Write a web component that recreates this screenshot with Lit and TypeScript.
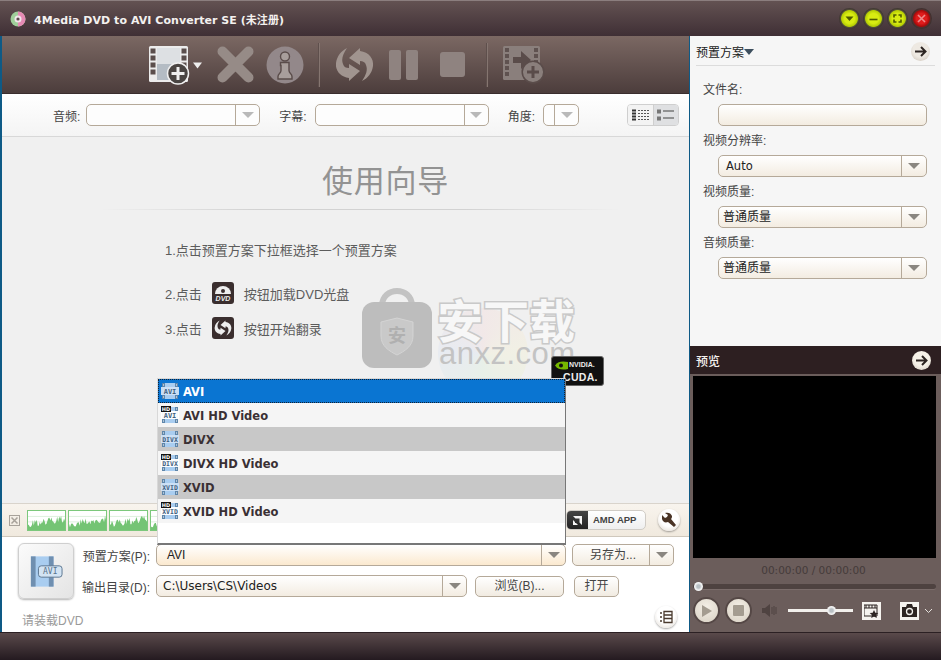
import { LitElement, html, css, svg } from 'lit';
import { customElement } from 'lit/decorators.js';

const formats = [
  { name: 'AVI', tag: 'AVI', hd: false, cls: 'sel' },
  { name: 'AVI HD Video', tag: 'AVI', hd: true, cls: 'light' },
  { name: 'DIVX', tag: 'DIVX', hd: false, cls: 'dark' },
  { name: 'DIVX HD Video', tag: 'DIVX', hd: true, cls: 'light' },
  { name: 'XVID', tag: 'XVID', hd: false, cls: 'dark' },
  { name: 'XVID HD Video', tag: 'XVID', hd: true, cls: 'light' },
];

// spiky audio-level outline for the little thumbnails
function wave(seed: number) {
  let d = 'M0 21';
  let v = seed;
  for (let x = 0; x <= 38; x++) {
    v = (v * 37 + 11) % 101;
    const rise = 3 + (x / 38) * 6;
    const h = rise + (v % 7 === 0 ? 7 : (v % 5));
    d += `L${x} ${21 - h}`;
  }
  return d + 'L38 21Z';
}

const syncShape = svg`
  <path d="M13 12L24 2V5C33 6 38 13 37 20C36 27 32 32 26 35C30 29 32 24 30 19C29 16 27 15 24 15V19Z" />
  <path d="M24 25L13 35V32C4 31 -1 24 0 17C1 10 5 5 11 2C7 8 5 13 7 18C8 21 10 22 13 22V18Z" />
`;

function filmIcon(tag: string, hd: boolean) {
  return html`<svg class="film" width="18" height="18" viewBox="0 0 18 18">
    <rect x="2" y="1" width="14" height="16" fill="#a9cdf0" />
    <rect x="1" y="1" width="3" height="16" fill="#5f86aa" />
    <rect x="14" y="1" width="3" height="16" fill="#5f86aa" />
    <path d="M2 3h1M2 6h1M2 9h1M2 12h1M2 15h1M15 3h1M15 6h1M15 9h1M15 12h1M15 15h1" stroke="#fff" stroke-width="1.2" />
    <rect x="0" y="5" width="18" height="8" fill=${hd ? '#fff' : '#cfe2f5'} opacity=".95" />
    <text x="9" y="11.600" text-anchor="middle" font-family="DejaVu Sans Mono" font-size=${tag.length > 3 ? 6.5 : 7} fill="#3f5f80">${tag}</text>
    ${hd
      ? svg`<rect x="0" y="0" width="10" height="6" fill="#111" /><text x="5" y="5" text-anchor="middle" font-family="DejaVu Sans" font-weight="700" font-size="5" fill="#fff">HD</text>`
      : ''}
  </svg>`;
}

function combo(text: string, cls = '') {
  return html`<div class="combo ${cls}">
    <span class="combo-text">${text}</span>
    <span class="combo-arrow"><i class="tri"></i></span>
  </div>`;
}

@customElement('app-root')
export class AppRoot extends LitElement {
  static styles = css`
    :host {
      display: block;
      width: 941px;
      height: 660px;
      font-family: "Liberation Sans", "Noto Sans CJK SC", sans-serif;
      font-size: 12px;
      color: #333;
      overflow: hidden;
    }
    .window {
      position: relative;
      width: 941px;
      height: 660px;
      display: flex;
      flex-direction: column;
      background: #4a3a3c;
      overflow: hidden;
    }
    .title {
      height: 36px;
      flex: none;
      display: flex;
      align-items: center;
      padding: 0 9px;
      box-sizing: border-box;
      background: linear-gradient(#635252, #3f2f35);
      border-top: 1px solid #8b7e7e;
    }
    .title-text {
      margin-left: 7px;
      font-family: "DejaVu Sans", "Noto Sans CJK SC", sans-serif;
      font-size: 11px;
      font-weight: 700;
      letter-spacing: .05px;
      color: #f4f1ef;
    }
    .win-btns {
      margin-left: auto;
      display: flex;
      gap: 3px;
    }
    .win-btn {
      width: 21px;
      height: 21px;
      border-radius: 50%;
      background: radial-gradient(circle 10.500px, #d8ec12 0 5px, #b4cc04 8px, #55523a 8.800px, #38302e 100%);
      display: flex;
      align-items: center;
      justify-content: center;
    }
    .win-btn.close {
      background: radial-gradient(circle 10.500px, #e01c1c 0 5px, #a80a0a 8px, #53302f 8.800px, #38302e 100%);
    }
    .middle {
      flex: 1;
      min-height: 0;
      display: flex;
      padding-left: 2px;
      background: #0e5a86;
    }
    .left {
      width: 687px;
      flex: none;
      display: flex;
      flex-direction: column;
      margin-right: 1px;
    }
    .right {
      flex: 1;
      display: flex;
      flex-direction: column;
      background: #f6f6f6;
    }
    .toolbar {
      height: 58px;
      flex: none;
      box-sizing: border-box;
      padding-left: 146px;
      display: flex;
      align-items: center;
      background: linear-gradient(#7b6863, #4c3d3c);
      border-bottom: 1px solid #3a2e2e;
    }
    .tb-sep {
      width: 1px;
      height: 44px;
      background: #5e4f4c;
      box-shadow: 1px 0 0 #857570;
    }
    .t-x { margin-left: 14px; }
    .t-info { margin-left: 12px; }
    .t-sep1 { margin-left: 14px; }
    .t-sync { margin-left: 17px; }
    .t-pause { margin-left: 15px; }
    .t-stop { margin-left: 22px; }
    .t-sep2 { margin-left: 21px; }
    .t-film { margin-left: 16px; }
    .filters {
      height: 43px;
      flex: none;
      box-sizing: border-box;
      display: flex;
      align-items: center;
      padding: 0 10px 0 51px;
      background: linear-gradient(#fff, #f4f4f4);
      border-bottom: 1px solid #d8d8d8;
    }
    .filters label {
      font-size: 12px;
      color: #444;
      margin-right: 8px;
    }
    .filters label:first-child {
      margin-right: 6px;
    }
    .combo {
      display: flex;
      height: 22px;
      box-sizing: border-box;
      border: 1px solid #b5a999;
      border-radius: 5px;
      background: linear-gradient(#fff, #f3ece1);
    }
    .combo-text {
      flex: 1;
      min-width: 0;
      padding-left: 4px;
      line-height: 20px;
      font-size: 12px;
      color: #222;
      white-space: nowrap;
      overflow: hidden;
    }
    .combo-arrow {
      width: 23px;
      flex: none;
      border-left: 1px solid #b5a999;
      display: flex;
      align-items: center;
      justify-content: center;
    }
    .tri {
      width: 0;
      height: 0;
      border-style: solid;
      border-width: 6px 6px 0;
      border-color: #8a8680 transparent transparent;
    }
    .plain {
      background: #fdfdfd;
    }
    .plain .tri {
      border-top-color: #b9b9b9;
    }
    .f-audio { width: 174px; margin-right: 19px; }
    .f-sub { width: 174px; margin-right: 19px; }
    .f-angle { width: 36px; }
    .f-angle .combo-text { padding: 0; }
    .view-toggle {
      margin-left: auto;
      display: flex;
      width: 52px;
      height: 22px;
      border: 1px solid #cfcfcf;
      border-radius: 4px;
      box-sizing: border-box;
      overflow: hidden;
    }
    .view-toggle span {
      flex: 1;
      display: flex;
      align-items: center;
      justify-content: center;
      background: #f3f3f3;
    }
    .view-toggle span + span {
      background: #dfe0e2;
      border-left: 1px solid #cfcfcf;
    }
    .guide {
      flex: 1;
      min-height: 0;
      background: #f0f0f0;
      box-sizing: border-box;
      padding-top: 25px;
      display: flex;
      flex-direction: column;
    }
    .guide-title {
      padding-left: 80px;
      text-align: center;
      font-size: 31px;
      line-height: 40px;
      letter-spacing: .8px;
      color: #939393;
    }
    .guide-rule {
      height: 1px;
      width: 520px;
      margin: 7px 0 0 98px;
      background: linear-gradient(90deg, transparent, #d2d2d2 30%, #d2d2d2 70%, transparent);
    }
    .steps {
      margin: 27px 0 0 163px;
      display: flex;
      flex-direction: column;
      font-size: 13px;
      color: #5c5c5c;
    }
    .step {
      display: flex;
      align-items: center;
      height: 24px;
      margin-bottom: 11px;
    }
    .step:first-child { margin-bottom: 20px; }
    .step-icon {
      width: 22px;
      height: 22px;
      margin: 0 10px;
      border-radius: 3px;
      background: #3a2e2e;
      display: flex;
    }
    .strip {
      height: 34px;
      flex: none;
      box-sizing: border-box;
      display: flex;
      align-items: center;
      padding: 0 9px 0 7px;
      background: linear-gradient(#f8f4ee, #f0e9de);
      border-top: 1px solid #d9d4cc;
      border-bottom: 1px solid #cfc8bc;
    }
    .strip-x {
      width: 11px;
      height: 11px;
      box-sizing: border-box;
      border: 1px solid #a8a29a;
      margin-right: 7px;
      display: flex;
    }
    .thumbs {
      display: flex;
      gap: 2px;
    }
    .thumb {
      width: 39px;
      height: 21px;
      box-sizing: border-box;
      border: 1px solid #7cc87c;
      background: #fff;
      display: flex;
    }
    .amd {
      margin-left: auto;
      display: flex;
      align-items: stretch;
      width: 80px;
      height: 20px;
      margin-right: 1px;
      border: 1px solid #d0ccc6;
      border-radius: 5px;
      box-sizing: border-box;
      background: linear-gradient(#fff, #efefef);
      overflow: hidden;
      font-size: 9.500px;
      font-weight: 700;
      color: #444;
      line-height: 18px;
    }
    .amd b {
      width: 21px;
      margin-right: 5px;
      background: linear-gradient(#444, #222);
      display: flex;
      align-items: center;
      justify-content: center;
    }
    .round {
      border-radius: 50%;
      background: radial-gradient(circle at 50% 40%, #fff 50%, #ddd5cb);
      box-shadow: 0 1px 2px rgba(0, 0, 0, .35);
      display: flex;
      align-items: center;
      justify-content: center;
    }
    .wrench {
      width: 22px;
      height: 22px;
      margin-left: 11px;
    }
    .form {
      height: 95px;
      flex: none;
      box-sizing: border-box;
      background: #fff;
      padding: 6px 10px 0 16px;
      display: grid;
      grid-template-columns: 56px 1fr;
      grid-template-rows: 56px auto;
      align-content: start;
      column-gap: 6px;
    }
    .format-btn {
      width: 56px;
      height: 56px;
      box-sizing: border-box;
      border: 1px solid #cfcfcf;
      border-radius: 6px;
      background: linear-gradient(135deg, #fbfbfb, #e4e4e4);
      box-shadow: 0 1px 2px rgba(0, 0, 0, .3);
      display: flex;
      align-items: center;
      justify-content: center;
    }
    .form-rows {
      display: flex;
      flex-direction: column;
      gap: 9px;
      padding-top: 1px;
    }
    .form-row {
      display: flex;
      align-items: center;
    }
    .form-row label {
      width: 70px;
      white-space: nowrap;
      text-align: right;
      margin-right: 6px;
      font-size: 12px;
      color: #444;
    }
    .c-preset {
      width: 410px;
      background: linear-gradient(#fff, #fbe9cf);
      margin-right: 6px;
    }
    .c-preset .combo-text { padding-left: 10px; }
    .c-saveas { width: 102px; }
    .c-saveas .combo-text { text-align: center; color: #444; }
    .c-dir {
      width: 311px;
      margin-right: 8px;
    }
    .c-dir .combo-text {
      padding-left: 6px;
      font-family: "DejaVu Sans", sans-serif;
      font-size: 12px;
      line-height: 21px;
    }
    .btn {
      height: 21px;
      box-sizing: border-box;
      border: 1px solid #b5a999;
      border-radius: 5px;
      background: linear-gradient(#fff, #f1ebe1);
      text-align: center;
      line-height: 19px;
      font-size: 12px;
      color: #444;
    }
    .b-browse { width: 89px; margin-right: 10px; }
    .b-open { width: 45px; }
    .form-foot {
      grid-column: 1 / 3;
      display: flex;
      align-items: center;
      padding: 7px 0 0 4px;
      font-size: 12px;
      color: #9a9a9a;
    }
    .foot-text { padding-top: 4px; }
    .log {
      width: 22px;
      height: 22px;
      margin-left: auto;
      margin-right: 2px;
    }
    .panel {
      flex: 1;
      min-height: 0;
      display: flex;
      flex-direction: column;
      padding: 0 6px;
      background: #f6f6f6;
      box-sizing: border-box;
    }
    .panel-head {
      height: 30px;
      flex: none;
      box-sizing: border-box;
      display: flex;
      align-items: center;
      border-bottom: 1px solid #dcdcdc;
      font-size: 12px;
      color: #222;
      padding-top: 2px;
    }
    .panel-head .tri {
      border-top-color: #3d4f5e;
      border-width: 6px 5px 0;
    }
    .go {
      margin-left: auto;
      margin-right: 5px;
      width: 19px;
      height: 19px;
      background: radial-gradient(circle at 50% 40%, #eee9e2 50%, #c9bfb3);
      box-shadow: none;
    }
    .fields {
      padding: 15px 8px 0 7px;
      display: flex;
      flex-direction: column;
    }
    .fields label {
      height: 17px;
      line-height: 19px;
      font-size: 12px;
      color: #444;
      margin-bottom: 6px;
    }
    .fields .combo {
      margin: 0 0 6px 15px;
    }
    .fields .combo-arrow { width: 24px; }
    .latin .combo-text {
      padding-left: 7px;
      font-family: "DejaVu Sans", sans-serif;
      font-size: 11.500px;
    }
    .preview {
      height: 286px;
      flex: none;
      display: flex;
      flex-direction: column;
      background: #6b5d5b;
    }
    .preview-head {
      height: 28px;
      flex: none;
      box-sizing: border-box;
      display: flex;
      align-items: center;
      padding: 0 5px 0 6px;
      background: #2d1f21;
      color: #f4f1ee;
      font-size: 12px;
      font-weight: 500;
    }
    .preview-head .go {
      background: radial-gradient(circle at 50% 40%, #f6f1e8 50%, #cfc6ba);
    }
    .screen {
      height: 182px;
      flex: none;
      margin: 2px 5px 0 3px;
      background: #000;
    }
    .time {
      text-align: center;
      font-size: 10.500px;
      line-height: 14px;
      margin-top: 5px;
      padding-right: 4px;
      font-family: "DejaVu Sans", sans-serif;
      color: #453b3a;
    }
    .seek {
      position: relative;
      height: 5px;
      margin: 7px 5px 0 3px;
      border-radius: 3px;
      background: #4e4240;
      box-shadow: 0 1px 0 #7a6c6a;
    }
    .knob {
      position: absolute;
      top: -2px;
      left: 1px;
      width: 9px;
      height: 9px;
      border-radius: 50%;
      background: radial-gradient(circle, #b9c0c4 25%, #f2f2f2 55%);
    }
    .controls {
      display: flex;
      align-items: center;
      margin-top: 8px;
      padding-left: 3px;
    }
    .pbtn {
      width: 27px;
      height: 27px;
      box-sizing: border-box;
      border-radius: 50%;
      border: 2px solid #554846;
      background: radial-gradient(circle at 50% 35%, #f4efe6, #d8d0c3);
      display: flex;
      align-items: center;
      justify-content: center;
      margin-right: 5px;
    }
    .vol-icon { margin-left: 5px; }
    .vol {
      position: relative;
      width: 65px;
      height: 3px;
      margin-left: 11px;
      background: #f2f0ec;
    }
    .vol .knob {
      left: 39px;
      top: -3px;
    }
    .snap {
      width: 19px;
      height: 18px;
      background: #f5f3ef;
      display: flex;
      align-items: center;
      justify-content: center;
    }
    .s-clip { margin-left: 9px; }
    .s-cam { margin-left: 19px; }
    .chev { margin-left: 5px; }
    .status {
      height: 28px;
      flex: none;
      background: linear-gradient(#5a4a4b, #241a20);
      border-top: 1px solid #2b2023;
      box-sizing: border-box;
    }
    .menu {
      position: absolute;
      left: 157px;
      top: 378px;
      width: 409px;
      height: 167px;
      box-sizing: border-box;
      background: #fff;
      border: 1px solid #d8d8d8;
      border-right: 1px solid #777;
      border-bottom: 2px solid #777;
    }
    .item {
      height: 24px;
      display: flex;
      align-items: center;
      gap: 4px;
      padding-left: 3px;
      font-family: "DejaVu Sans", sans-serif;
      font-size: 11.500px;
      font-weight: 700;
      color: #3a3034;
    }
    .item span { padding-top: 2px; }
    .item.sel {
      background: #0a75d2;
      color: #fff;
      outline: 1px dotted #123;
      outline-offset: -1px;
    }
    .item.light { background: #f5f5f5; }
    .item.dark { background: #c8c8c8; }
    .watermark {
      position: absolute;
      left: 362px;
      top: 288px;
      display: flex;
      gap: 5px;
      pointer-events: none;
    }
    .wm-disc {
      position: absolute;
      left: 76px;
      top: 20px;
      width: 90px;
      height: 90px;
      border-radius: 50%;
      background: conic-gradient(#f7c8c8, #f6f0b8, #c8f0c8, #c8d8f4, #f7c8c8);
      opacity: .2;
    }
    .wm-text {
      position: relative;
      display: flex;
      flex-direction: column;
      margin-top: 6px;
    }
    .wm-big {
      font-family: "Noto Sans CJK SC", sans-serif;
      font-weight: 700;
      font-size: 46px;
      line-height: 48px;
      color: #f7f7f7;
      -webkit-text-stroke: 3px #c9c9c9;
      paint-order: stroke fill;
    }
    .wm-small {
      font-family: "Liberation Sans", sans-serif;
      font-size: 31px;
      line-height: 24px;
      color: #c3c3c3;
      letter-spacing: .5px;
      margin-left: 2px;
    }
    .cuda {
      position: absolute;
      left: 551px;
      top: 356px;
      width: 53px;
      height: 30px;
      box-sizing: border-box;
      border: 1px solid #666;
      border-radius: 3px;
      background: #111;
      color: #eee;
      font-weight: 700;
      padding: 3px 0 0 3px;
    }
    .cuda-top {
      display: flex;
      align-items: center;
      gap: 1px;
      font-size: 7px;
      line-height: 10px;
    }
    .cuda em {
      display: block;
      margin: 2px 0 0 8px;
      font-style: normal;
      font-size: 10.500px;
      line-height: 11px;
      letter-spacing: .3px;
    }
  `;

  private winIcon(d: string, color = '#4d5a00') {
    return html`<svg width="11" height="11" viewBox="0 0 11 11" fill="none" stroke=${color} stroke-width="1.600"><path d=${d} /></svg>`;
  }

  render() {
    return html`
      <div class="window">
        <div class="title">
          <svg width="18" height="18" viewBox="0 0 18 18">
            <circle cx="9" cy="9" r="7.500" fill="#9fcf9a" />
            <path d="M9 1.500A7.500 7.500 0 0 1 16.500 9 7.500 7.500 0 0 1 9 16.500Z" fill="#e58ab4" />
            <circle cx="9" cy="9" r="3.500" fill="#f1e6ea" />
            <circle cx="9" cy="9" r="1.600" fill="#5e4a4e" />
          </svg>
          <span class="title-text">4Media DVD to AVI Converter SE (未注册)</span>
          <div class="win-btns">
            <div class="win-btn">
              <svg width="11" height="11" viewBox="0 0 11 11"><path d="M1.500 3.500h8L5.500 8Z" fill="#4d5a00" /></svg>
            </div>
            <div class="win-btn">${this.winIcon('M1.500 6.500h8')}</div>
            <div class="win-btn">${this.winIcon('M2 4.500V2H4.500M6.500 2H9V4.500M9 6.500V9H6.500M4.500 9H2V6.500')}</div>
            <div class="win-btn close">${this.winIcon('M2 2l7 7M9 2l-7 7', '#ee8a8a')}</div>
          </div>
        </div>

        <div class="middle">
          <div class="left">
            <div class="toolbar">
              <svg width="55" height="40" viewBox="0 0 55 40">
                <rect x="1" y="1" width="39" height="36" rx="1.500" fill="#ececec" />
                <rect x="9" y="3" width="23" height="16" fill="#dde0e3" />
                <rect x="9" y="19" width="23" height="16" fill="#b4bcc4" />
                <path d="M5 3.500v28M36 3.500v28" stroke="#5b4e4c" stroke-width="5" stroke-dasharray="5 2" />
                <circle cx="30" cy="28.500" r="10.500" fill="#4a4543" stroke="#f0f0f0" stroke-width="1.500" />
                <path d="M30 22v13M23.500 28.500h13" stroke="#f0f0f0" stroke-width="3" />
                <path d="M45 17.500h9l-4.500 6Z" fill="#eee" />
              </svg>
              <svg class="t-x" width="37" height="37" viewBox="0 0 37 37">
                <path d="M5.500 5.500L31.500 31.500M31.500 5.500L5.500 31.500" stroke="#968b87" stroke-width="10" stroke-linecap="round" />
              </svg>
              <svg class="t-info" width="38" height="38" viewBox="0 0 38 38">
                <circle cx="19" cy="19" r="18.500" fill="#93888a" />
                <circle cx="19" cy="10.500" r="4.500" fill="#a89e9b" stroke="#5a4c4a" stroke-width="1.400" />
                <path d="M14.500 16.500h8.500v8c0 3 3 3 3 6v2.500H12v-2.500c0-3 3-3 3-6v-5h-.500Z" fill="#a89e9b" stroke="#5a4c4a" stroke-width="1.400" />
              </svg>
              <div class="tb-sep t-sep1"></div>
              <svg class="t-sync" width="38" height="38" viewBox="0 0 38 38" fill="#a0948f">${syncShape}</svg>
              <svg class="t-pause" width="29" height="30" viewBox="0 0 29 30" fill="#8f8380">
                <rect width="12" height="30" rx="2" />
                <rect x="17" width="12" height="30" rx="2" />
              </svg>
              <svg class="t-stop" width="25" height="25" viewBox="0 0 25 25"><rect width="25" height="25" rx="3" fill="#8f8380" /></svg>
              <div class="tb-sep t-sep2"></div>
              <svg class="t-film" width="42" height="38" viewBox="0 0 42 38">
                <rect x="0" y="0" width="37" height="34" rx="1.500" fill="#8a7f7c" />
                <path d="M4 2v30M33 2v18" stroke="#5f5250" stroke-width="4" stroke-dasharray="4 2" />
                <path d="M10 11h8V5l10 9-10 9v-6h-8Z" fill="#5a4c4a" />
                <circle cx="30" cy="26" r="10.800" fill="#8a7f7c" stroke="#5a4c4a" stroke-width="1.500" />
                <path d="M30 20v12M24 26h12" stroke="#5a4c4a" stroke-width="3" />
              </svg>
            </div>

            <div class="filters">
              <label>音频:</label>
              ${combo('', 'plain f-audio')}
              <label>字幕:</label>
              ${combo('', 'plain f-sub')}
              <label>角度:</label>
              ${combo('', 'plain f-angle')}
              <div class="view-toggle">
                <span>
                  <svg width="17" height="12" viewBox="0 0 17 12">
                    <path d="M0 1.500h4M0 4.500h4M0 7.500h4M0 10.500h4" stroke="#333" stroke-width="2" />
                    <path d="M6 1.500h11M6 4.500h11M6 7.500h11M6 10.500h11" stroke="#555" stroke-dasharray="2 1" />
                  </svg>
                </span>
                <span>
                  <svg width="17" height="12" viewBox="0 0 17 12">
                    <path d="M0 2.500h4M0 9.500h4" stroke="#777" stroke-width="4" />
                    <path d="M6 2h11M6 9h11" stroke="#777" stroke-width="1.500" />
                  </svg>
                </span>
              </div>
            </div>

            <div class="guide">
              <div class="guide-title">使用向导</div>
              <div class="guide-rule"></div>
              <div class="steps">
                <div class="step">1.点击预置方案下拉框选择一个预置方案</div>
                <div class="step">
                  2.点击
                  <span class="step-icon">
                    <svg width="22" height="22" viewBox="0 0 22 22">
                      <path d="M3 12a8 8 0 1 1 16 0Z" fill="#eee" />
                      <circle cx="11" cy="9" r="2" fill="#3a2e2e" />
                      <text x="11" y="19" text-anchor="middle" font-family="Liberation Sans" font-weight="700" font-style="italic" font-size="7" fill="#eee">DVD</text>
                    </svg>
                  </span>
                  按钮加载DVD光盘
                </div>
                <div class="step">
                  3.点击
                  <span class="step-icon">
                    <svg width="22" height="22" viewBox="-6 -6 49 49" fill="#eee">${syncShape}</svg>
                  </span>
                  按钮开始翻录
                </div>
              </div>
            </div>

            <div class="strip">
              <div class="strip-x">
                <svg width="9" height="9" viewBox="0 0 9 9"><path d="M1.500 1.500l6 6M7.500 1.500l-6 6" stroke="#a8a29a" stroke-width="1.500" /></svg>
              </div>
              <div class="thumbs">
                ${[7, 23, 41, 58].map(
                  (s) => html`<div class="thumb">
                    <svg width="37" height="19" viewBox="0 0 38 21" preserveAspectRatio="none">
                      <path d="M0 6h38M0 12h38" stroke="#dcefdc" />
                      <path d=${wave(s)} fill="#74c474" />
                    </svg>
                  </div>`
                )}
              </div>
              <div class="amd">
                <b>
                  <svg width="11" height="11" viewBox="0 0 11 11"><path d="M1 1h9v9L7.500 7.500V3.500H3.500ZM1 10V5l2 2v1h1l2 2Z" fill="#f4f4f4" /></svg>
                </b>
                AMD APP
              </div>
              <div class="round wrench">
                <svg width="16" height="16" viewBox="0 0 16 16">
                  <path d="M1 3l3 3 2-1 1-2-3-2c3-1 6 0 7 3 0 1 0 2-1 3l5 6-2 2-6-5c-3 1-5 0-6-3Z" fill="#4a3426" />
                </svg>
              </div>
            </div>

            <div class="form">
              <div class="format-btn">
                <svg width="34" height="31" viewBox="0 0 36 32">
                  <rect x="2" y="0" width="24" height="32" fill="#a9cdf0" />
                  <rect x="2" y="0" width="5" height="32" fill="#6f8fb0" />
                  <rect x="21" y="0" width="5" height="32" fill="#6f8fb0" />
                  <rect x="10" y="10" width="25" height="12" rx="3" fill="#d3e4f3" stroke="#58738d" />
                  <text x="22.500" y="19" text-anchor="middle" font-family="DejaVu Sans Mono" font-size="8.500" fill="#58738d">AVI</text>
                </svg>
              </div>
              <div class="form-rows">
                <div class="form-row">
                  <label>预置方案(P):</label>
                  ${combo('AVI', 'c-preset')}
                  ${combo('另存为...', 'c-saveas')}
                </div>
                <div class="form-row">
                  <label>输出目录(D):</label>
                  ${combo('C:\\Users\\CS\\Videos', 'c-dir')}
                  <div class="btn b-browse">浏览(B)...</div>
                  <div class="btn b-open">打开</div>
                </div>
              </div>
              <div class="form-foot">
                <span class="foot-text">请装载DVD</span>
                <div class="round log">
                  <svg width="14" height="14" viewBox="0 0 14 14" fill="none" stroke="#4a3a2e" stroke-width="1.300">
                    <path d="M5 1.500h8v11H5ZM5 5h8M5 8.500h8M1 3h2M1 7h2M1 11h2" />
                  </svg>
                </div>
              </div>
            </div>
          </div>

          <div class="right">
            <div class="panel">
              <div class="panel-head">
                预置方案<i class="tri"></i>
                <span class="round go">
                  <svg width="13" height="13" viewBox="0 0 13 13" fill="none" stroke="#2d2522" stroke-width="2"><path d="M1 6.500h10M7 2l4.500 4.500L7 11" /></svg>
                </span>
              </div>
              <div class="fields">
                <label>文件名:</label>
                <div class="combo"></div>
                <label>视频分辨率:</label>
                ${combo('Auto', 'latin')}
                <label>视频质量:</label>
                ${combo('普通质量')}
                <label>音频质量:</label>
                ${combo('普通质量')}
              </div>
            </div>
            <div class="preview">
              <div class="preview-head">
                预览
                <span class="round go">
                  <svg width="13" height="13" viewBox="0 0 13 13" fill="none" stroke="#2d2522" stroke-width="2"><path d="M1 6.500h10M7 2l4.500 4.500L7 11" /></svg>
                </span>
              </div>
              <div class="screen"></div>
              <div class="time">00:00:00 / 00:00:00</div>
              <div class="seek"><span class="knob"></span></div>
              <div class="controls">
                <div class="pbtn">
                  <svg width="12" height="14" viewBox="0 0 12 14"><path d="M1 1l10 6-10 6Z" fill="#a49c90" /></svg>
                </div>
                <div class="pbtn">
                  <svg width="11" height="11" viewBox="0 0 11 11"><rect width="11" height="11" rx="1" fill="#a49c90" /></svg>
                </div>
                <svg class="vol-icon" width="15" height="13" viewBox="0 0 15 13">
                  <path d="M0 4h3l5-4v13l-5-4H0Z" fill="#4f4341" />
                  <path d="M10 3v7M12 2v9M14 3v7" stroke="#4f4341" />
                </svg>
                <div class="vol"><span class="knob"></span></div>
                <div class="snap s-clip">
                  <svg width="15" height="14" viewBox="0 0 15 14">
                    <path d="M0 1h13v11H0Z" fill="none" stroke="#2d2522" />
                    <path d="M0 4h13M2 1v3M5 1v3M8 1v3M11 1v3" stroke="#2d2522" />
                    <path d="M10 6l1.300 2.700 3 .3-2.200 2 .7 3-2.800-1.600L7.200 14l.7-3-2.200-2 3-.3Z" fill="#2d2522" />
                  </svg>
                </div>
                <div class="snap s-cam">
                  <svg width="15" height="13" viewBox="0 0 15 13">
                    <path d="M0 3h4l1-3h5l1 3h4v10H0Z" fill="#2d2522" />
                    <circle cx="7.500" cy="7.500" r="3" fill="none" stroke="#f5f3ef" stroke-width="1.300" />
                  </svg>
                </div>
                <svg class="chev" width="9" height="6" viewBox="0 0 9 6" fill="none" stroke="#e6e2dd"><path d="M1 1l3.500 3.500L8 1" /></svg>
              </div>
            </div>
          </div>
        </div>

        <div class="status"></div>

        <div class="watermark">
          <span class="wm-disc"></span>
          <svg width="70" height="80" viewBox="0 0 70 80">
            <path d="M20 18C20 -2 50 -2 50 18" fill="none" stroke="#c3c3c3" stroke-width="6" />
            <rect x="0" y="14" width="70" height="66" rx="12" fill="#bdbdbd" />
            <path d="M35 30l16 4v14c0 10-8 15-16 19-8-4-16-9-16-19V34Z" fill="#c9c9c9" stroke="#d4d4d4" />
            <text x="35" y="54" text-anchor="middle" font-family="Noto Sans CJK SC" font-weight="700" font-size="18" fill="#b0b0b0">安</text>
          </svg>
          <div class="wm-text">
            <span class="wm-big">安下载</span>
            <span class="wm-small">anxz.com</span>
          </div>
        </div>

        <div class="cuda">
          <div class="cuda-top">
            <svg width="13" height="9" viewBox="0 0 13 9"><path d="M0 4.500C3 0 8 0 13 1v7C8 9 3 9 0 4.500Z" fill="#76b900" /><circle cx="6" cy="4.500" r="2" fill="#111" /></svg>
            <span>NVIDIA.</span>
          </div>
          <em>CUDA.</em>
        </div>

        <div class="menu">
          ${formats.map(
            (f) => html`<div class="item ${f.cls}">${filmIcon(f.tag, f.hd)}<span>${f.name}</span></div>`
          )}
        </div>
      </div>
    `;
  }
}
